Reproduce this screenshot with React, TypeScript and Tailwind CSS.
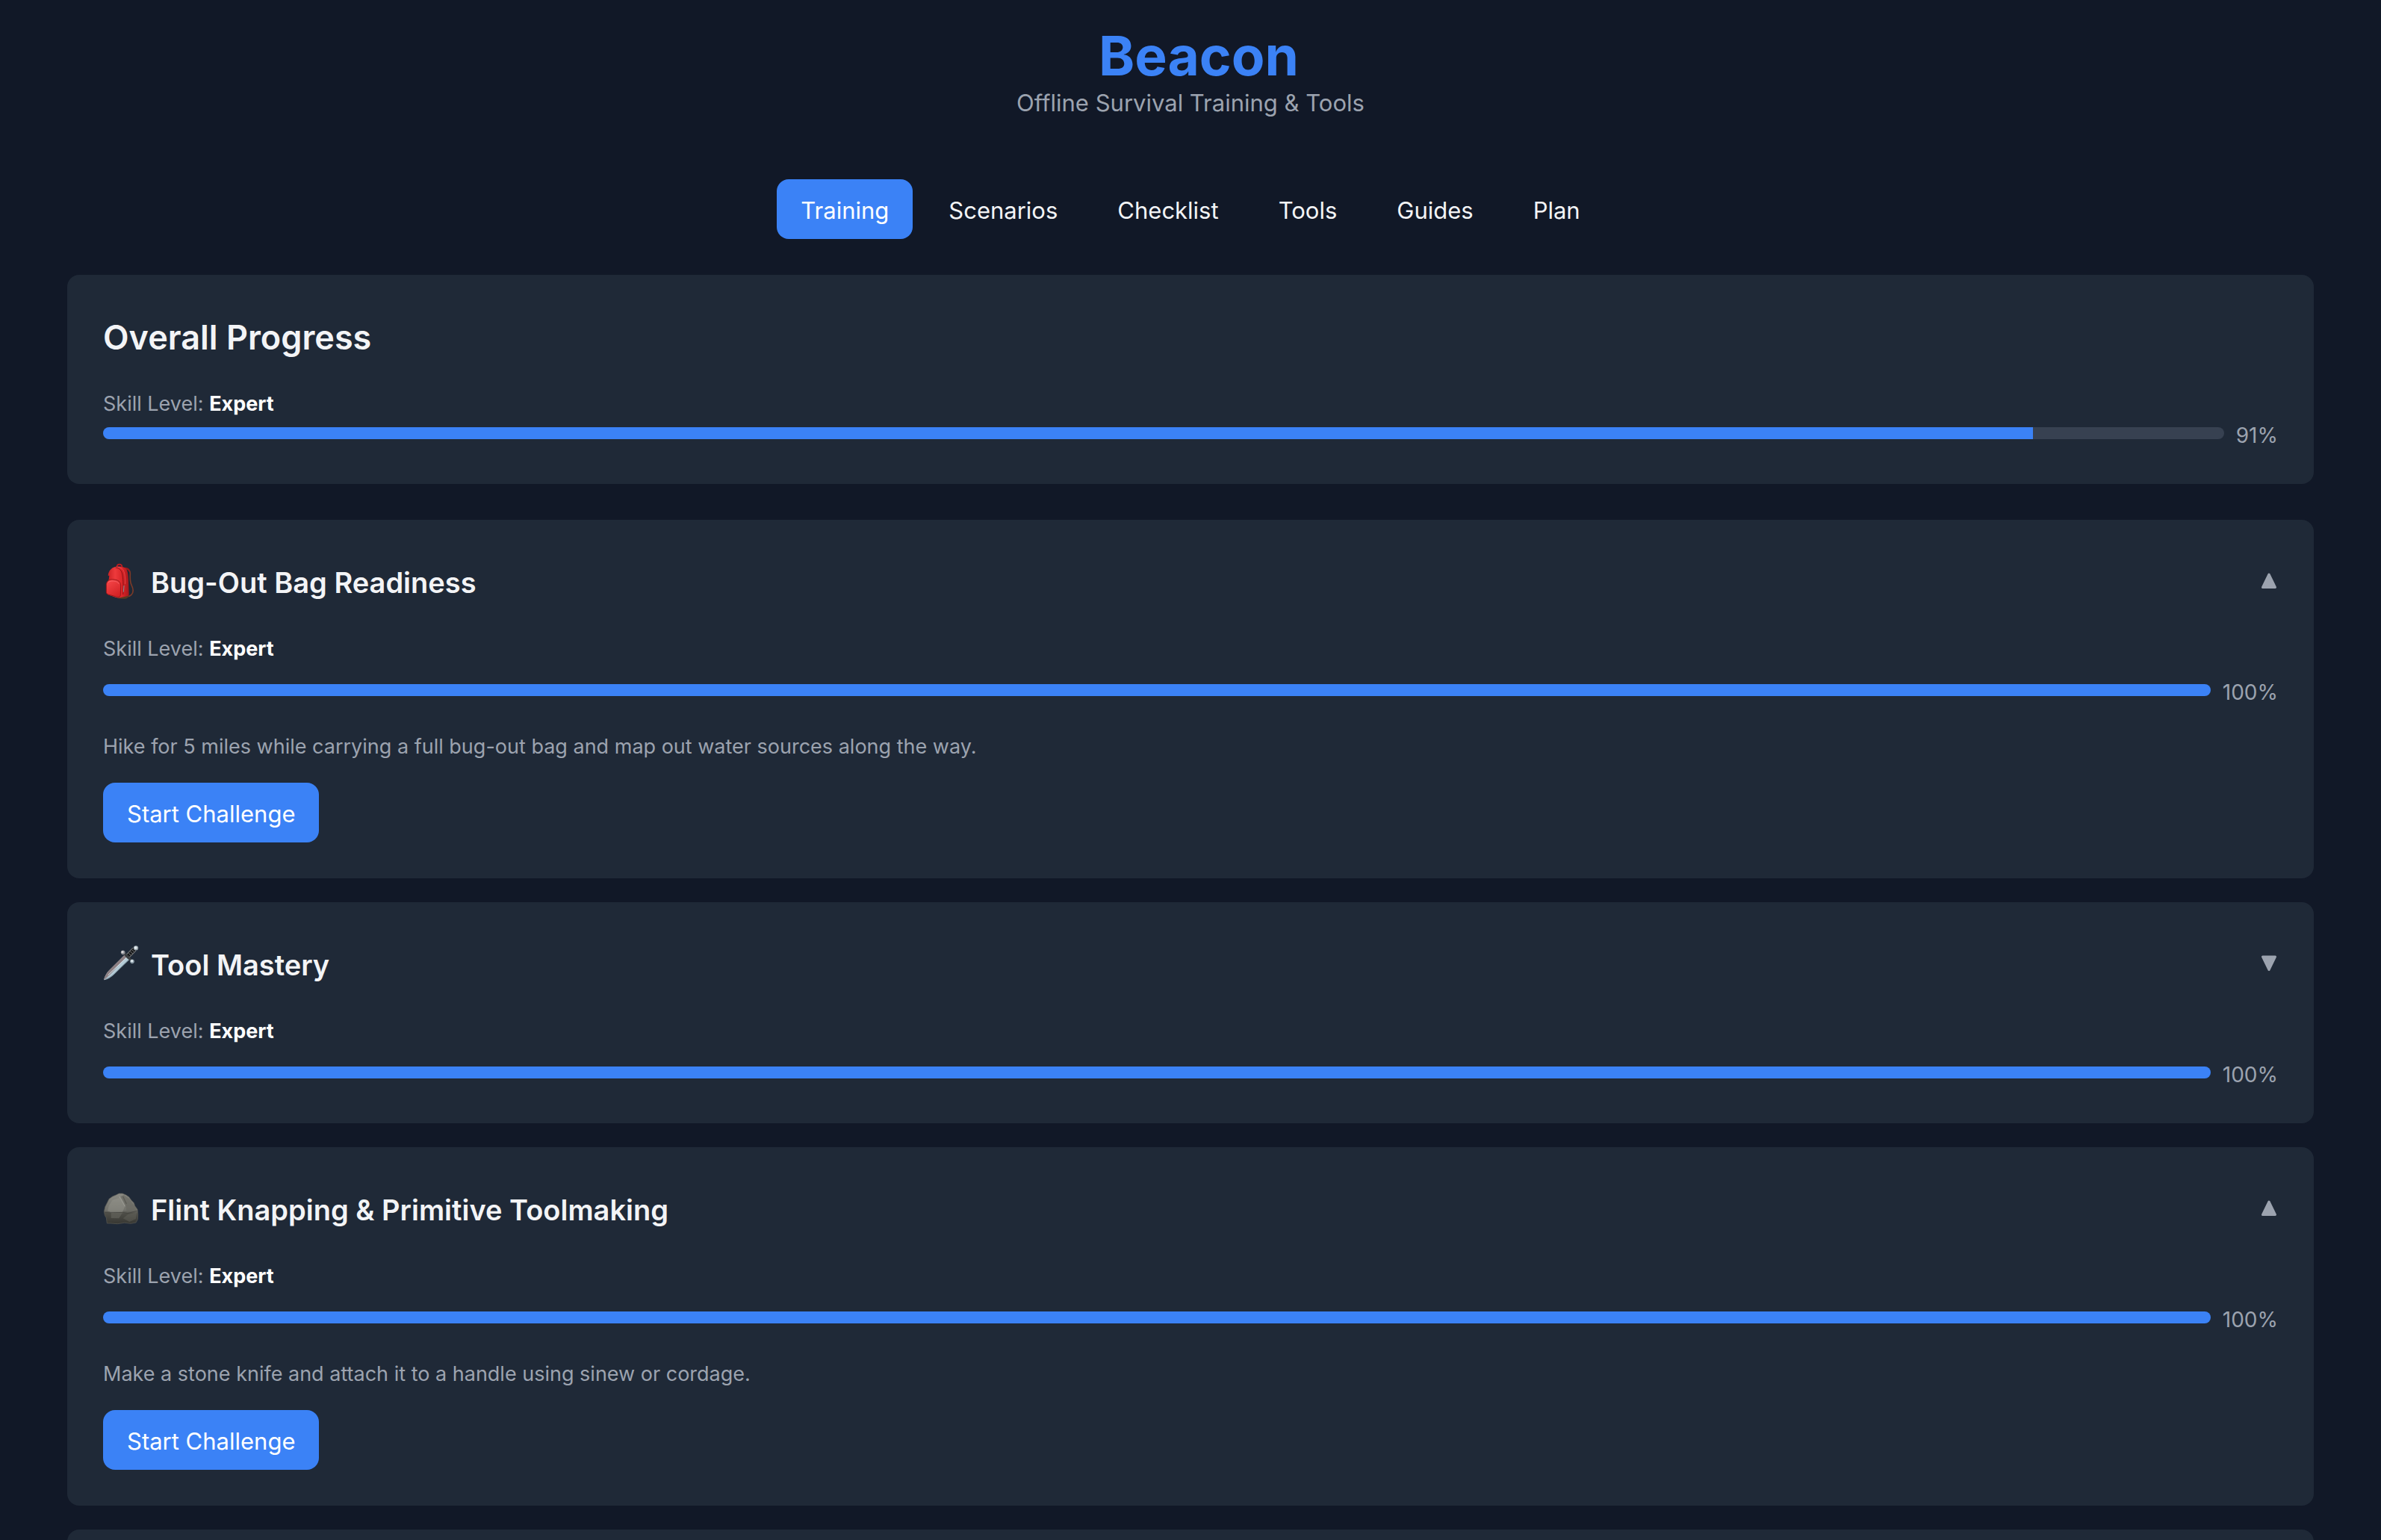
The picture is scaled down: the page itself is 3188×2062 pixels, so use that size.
import { useState } from "react";

function Backpack() {
  return (
    <svg viewBox="54 42 144 144" className="mb-1 size-12 shrink-0" aria-hidden="true">
      <defs>
        <linearGradient id="bag" x1="0" x2="1" y1="0" y2="0">
          <stop offset="0" stopColor="#c81f22" />
          <stop offset="0.35" stopColor="#ee3a3c" />
          <stop offset="0.7" stopColor="#d92427" />
          <stop offset="1" stopColor="#a8181c" />
        </linearGradient>
        <linearGradient id="pocket" x1="0" x2="0.6" y1="0" y2="1">
          <stop offset="0" stopColor="#f9494b" />
          <stop offset="1" stopColor="#d42326" />
        </linearGradient>
      </defs>
      <path d="M109 60c0-9 5-13 11-13s11 4 10 12" fill="none" stroke="#c01d21" strokeWidth="5" />
      <path d="M140 64c16 1 24 8 23 22-1 18-2 30 6 46 6 12 8 28-2 38-4 4-10 6-16 6" fill="none" stroke="#7a3a28" strokeWidth="5" />
      <path d="M136 62c15-1 23 5 25 15" fill="none" stroke="#a3181b" strokeWidth="5" />
      <path d="M112 176l36-4 10 4-8 7c-10 4-26 3-38-1z" fill="#5a3a22" />
      <path d="M74 92c2-20 14-33 32-36 16-2 36 0 43 12 5 10 6 24 7 42l2 56c0 6-3 8-8 9l-28 6c-6 1-12 0-18-2l-26-9c-5-2-6-6-6-12l1-30c1-12 5-20 6-36z" fill="url(#bag)" />
      <path d="M104 60c18 2 25 12 28 30 3 20 4 50 2 78" fill="none" stroke="#7d1013" strokeWidth="2.5" />
      <path d="M114 58c17 2 24 13 27 30 2 12 3 26 2 38" fill="none" stroke="#f25557" strokeWidth="2" />
      <path d="M138 132l-2 26" stroke="#8c8f98" strokeWidth="3" />
      <path d="M67 128c2-16 14-22 29-20 18 1 28 8 29 24l-1 36c0 9-4 12-12 10l-34-9c-8-2-11-5-11-12z" fill="url(#pocket)" stroke="#9c1619" strokeWidth="3" />
      <path d="M74 120c8-9 38-9 44 6" fill="none" stroke="#fb7375" strokeWidth="2" />
    </svg>
  );
}

function Dagger() {
  return (
    <svg viewBox="54 48 144 144" className="mb-1 size-12 shrink-0" aria-hidden="true">
      <path d="M57 187c3-14 10-28 22-40l61-61 20 18-62 60c-11 11-24 19-41 23z" fill="#b4cbd6" />
      <path d="M57 187c3-14 10-28 22-40l61-61 9 8-61 65c-10 10-20 18-31 28z" fill="#8d7f82" />
      <path d="M74 167l78-74" stroke="#dbeaf1" strokeWidth="3" />
      <path d="M64 183c13-5 24-11 34-21l60-58" fill="none" stroke="#6d8491" strokeWidth="2" />
      <path d="M148 96l32-33" stroke="#717476" strokeWidth="20" />
      <path d="M148 96l32-33" stroke="#17181a" strokeWidth="13" />
      <path d="M150 86l9 9M157 79l9 9M164 72l9 9M171 66l7 7" stroke="#85898a" strokeWidth="2.5" />
      <path d="M135 76l36 36" stroke="#3c3f42" strokeWidth="9" />
      <circle cx="134" cy="76" r="8.5" fill="#8c8f94" />
      <circle cx="132" cy="74" r="5" fill="#d9d6d8" />
      <circle cx="171" cy="112" r="8.5" fill="#8a9aa5" />
      <circle cx="170" cy="110" r="5" fill="#dfe9ef" />
      <circle cx="186" cy="58" r="9.5" fill="#97a2a9" />
      <circle cx="185" cy="57" r="6" fill="#e3ebef" />
    </svg>
  );
}

function Rock() {
  return (
    <svg viewBox="54 42 144 144" className="mb-1 size-12 shrink-0" aria-hidden="true">
      <defs>
        <linearGradient id="rock" x1="0" x2="0" y1="0" y2="1">
          <stop offset="0" stopColor="#8b8b84" />
          <stop offset="0.55" stopColor="#71716b" />
          <stop offset="0.66" stopColor="#4d4d47" />
          <stop offset="1" stopColor="#373732" />
        </linearGradient>
      </defs>
      <path
        d="M58 127L62 108L70 92L78 76L92 66L106 60L118 54L132 54L146 60L158 68L168 82L178 92L182 104L192 118L194 138L193 158L186 171L166 175L140 172L112 176L84 174L70 174L67 152L61 142Z"
        fill="url(#rock)"
        stroke="#5a5a54"
        strokeWidth="2"
        strokeLinejoin="round"
      />
      <path d="M92 80L78 102L72 124L86 130L132 130L142 104L120 72Z" fill="#96968f" fillOpacity="0.45" />
      <path d="M124 66L144 100L150 130L190 124L180 104L160 76L138 60Z" fill="#66665f" fillOpacity="0.6" />
      <path d="M119 66L130 84L142 106" fill="none" stroke="#b3b2aa" strokeWidth="3" strokeOpacity="0.6" />
      <path d="M134 66L148 96" fill="none" stroke="#494943" strokeWidth="4" strokeOpacity="0.5" />
      <path d="M60 130L86 132L134 130L152 134L190 124" fill="none" stroke="#42423d" strokeWidth="3" strokeOpacity="0.7" />
      <path d="M86 132V153L118 154L132 132Z" fill="#6b6b64" fillOpacity="0.5" />
      <path d="M134 154L154 138L190 130L186 156L160 168Z" fill="#6f6f67" fillOpacity="0.35" />
    </svg>
  );
}

function Toggle({ open }: { open: boolean }) {
  return (
    <svg viewBox="0 0 24 24" className="mb-1 size-6" aria-hidden="true">
      <path
        d={open ? "M12 3 L20.5 20.5 H3.5 Z" : "M12 20.5 L3.5 3 H20.5 Z"}
        fill="#9ca3af"
        stroke="#9ca3af"
        strokeWidth="3"
        strokeLinejoin="round"
      />
    </svg>
  );
}

function SkillLevel({ level }: { level: string }) {
  return (
    <p className="pt-0.5 text-[27px] leading-[38px] text-[#9ca3af]">
      Skill Level: <strong className="font-bold text-white">{level}</strong>
    </p>
  );
}

function Progress({ value, label }: { value: number; label: string }) {
  return (
    <div className="flex items-center gap-4">
      <div
        role="progressbar"
        aria-label={label}
        aria-valuenow={value}
        className="h-4 flex-1 overflow-hidden rounded-lg bg-[#374151]"
      >
        <div className="h-full bg-[#3b82f6]" style={{ width: `${value}%` }} />
      </div>
      <span className="pt-1.5 text-[28px] leading-[34px] text-[#9ca3af]">{value}%</span>
    </div>
  );
}

const tabs = ["Training", "Scenarios", "Checklist", "Tools", "Guides", "Plan"];

const skills = [
  {
    title: "Bug-Out Bag Readiness",
    icon: <Backpack />,
    open: true,
    challenge: "Hike for 5 miles while carrying a full bug-out bag and map out water sources along the way.",
  },
  { title: "Tool Mastery", icon: <Dagger />, open: false, challenge: "" },
  {
    title: "Flint Knapping & Primitive Toolmaking",
    icon: <Rock />,
    open: true,
    challenge: "Make a stone knife and attach it to a handle using sinew or cordage.",
  },
];

export default function App() {
  const [tab, setTab] = useState("Training");
  return (
    <div className="h-screen overflow-hidden bg-[#111827] px-[90px] font-['Inter',sans-serif] text-[#f3f4f6]">
      <header className="flex flex-col items-center pt-[37px]">
        <h1 className="pl-[22px] text-[73px] leading-[76px] font-bold text-[#3b82f6]">Beacon</h1>
        <p className="text-[31px] leading-[50px] text-[#9ca3af]">Offline Survival Training &amp; Tools</p>
      </header>

      <nav className="mt-[77px] flex justify-center gap-4">
        {tabs.map((name) => (
          <button
            key={name}
            type="button"
            onClick={() => setTab(name)}
            className={
              name === tab
                ? "rounded-2xl bg-[#3b82f6] px-8 pt-[18px] pb-3.5 text-[31px] leading-[48px] text-white"
                : "rounded-2xl px-8 pt-[18px] pb-3.5 text-[31px] leading-[48px]"
            }
          >
            {name}
          </button>
        ))}
      </nav>

      <main className="mt-12">
        <section className="rounded-2xl bg-[#1f2937] p-12">
          <h2 className="mb-8 text-[45px] leading-[72px] font-semibold">Overall Progress</h2>
          <SkillLevel level="Expert" />
          <Progress value={91} label="Overall progress" />
        </section>

        <div className="mt-12 flex flex-col gap-8">
          {skills.map((skill) => (
            <section key={skill.title} className="rounded-2xl bg-[#1f2937] p-12">
              <button type="button" className="mb-8 flex h-[72px] w-full items-center justify-between text-left">
                <span className="flex items-center gap-4 text-[38px] leading-[72px] font-semibold">
                  {skill.icon}
                  {skill.title}
                </span>
                <Toggle open={skill.open} />
              </button>
              <div className="flex flex-col gap-4">
                <SkillLevel level="Expert" />
                <Progress value={100} label={skill.title} />
              </div>
              {skill.open && (
                <>
                  <p className="mt-9 mb-7 text-[27px] leading-10 text-[#9ca3af]">{skill.challenge}</p>
                  <button
                    type="button"
                    className="block rounded-2xl bg-[#3b82f6] px-8 pt-[18px] pb-3.5 text-[31px] leading-[48px] text-white"
                  >
                    Start Challenge
                  </button>
                </>
              )}
            </section>
          ))}
          <section className="h-[296px] rounded-2xl bg-[#1f2937]" />
        </div>
      </main>
    </div>
  );
}
